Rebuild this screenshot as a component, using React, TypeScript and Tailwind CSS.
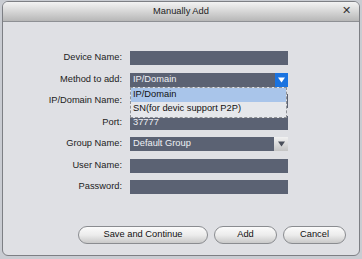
import React from "react";

const Arrow = ({ color }: { color: string }) => (
  <svg width="7" height="6" viewBox="0 0 7 6">
    <path d="M0 0.5 H7 L3.5 5.5 Z" fill={color} />
  </svg>
);

function Row({ label, children }: { label: string; children: React.ReactNode }) {
  return (
    <div className="flex h-[14px] items-center">
      <div className="w-[120px] shrink-0 pr-[1px] text-right text-[#1c1c1c]">{label}</div>
      <div className="relative ml-[7px] h-[14px] w-[158px]">{children}</div>
    </div>
  );
}

const Field = ({ value }: { value?: string }) => (
  <div className="flex h-full w-full items-center bg-[#5b6273] pl-[3px] text-[#eef0f4]">{value}</div>
);

export default function App() {
  return (
    <div
      className="relative h-[259px] w-[362px] overflow-hidden bg-[#c9ccd2] pt-[1px] pl-[2px]"
      style={{ fontFamily: '"Liberation Sans", Arial, sans-serif' }}
    >
      <div className="flex h-[255px] w-[358px] flex-col overflow-hidden rounded-[6px] border border-[#7d7f84] bg-[#dfe0e4] text-[9.3px]">
        <div className="relative flex h-[20px] shrink-0 items-center justify-center border-b border-[#8e9094] bg-gradient-to-b from-[#f3f3f3] via-[#d6d6d6] to-[#b7b7b7] text-[#222]">
          <span>Manually Add</span>
          <span className="absolute right-[8px] top-[3px] text-[11px] leading-none text-[#333]">✕</span>
        </div>
        <div className="flex flex-1 flex-col pt-[29px]">
          <div className="flex flex-col gap-[7.5px]">
            <Row label="Device Name:">
              <Field />
            </Row>
            <Row label="Method to add:">
              <div className="flex h-full w-full">
                <div className="flex flex-1 items-center bg-[#5b6273] pl-[3px] text-[#eef0f4]">IP/Domain</div>
                <div className="flex w-[13px] items-center justify-center bg-[#1a73e0]">
                  <Arrow color="#ffffff" />
                </div>
              </div>
              <div className="absolute left-0 top-[14px] z-10 w-[157px] border border-dashed border-[#8f9296] bg-[#e5e7eb] text-[#111]">
                <div className="flex h-[14px] items-center bg-[#a9c5ea] pl-[2px]">IP/Domain</div>
                <div className="flex h-[15px] items-center pl-[2px]">SN(for devic support P2P)</div>
              </div>
            </Row>
            <Row label="IP/Domain Name:">
              <Field />
            </Row>
            <Row label="Port:">
              <Field value="37777" />
            </Row>
            <Row label="Group Name:">
              <div className="flex h-full w-full">
                <div className="flex flex-1 items-center bg-[#5b6273] pl-[3px] text-[#eef0f4]">Default Group</div>
                <div className="flex w-[14px] items-center justify-center bg-gradient-to-b from-[#f2f2f2] to-[#c4c4c4]">
                  <Arrow color="#4a4f5a" />
                </div>
              </div>
            </Row>
            <Row label="User Name:">
              <Field />
            </Row>
            <Row label="Password:">
              <Field />
            </Row>
          </div>
          <div className="mt-auto flex justify-end gap-[6px] pb-[11px] pr-[13px]">
            {[
              ["Save and Continue", "w-[130px]"],
              ["Add", "w-[63px]"],
              ["Cancel", "w-[63px]"],
            ].map(([t, w]) => (
              <div
                key={t}
                className={`${w} flex h-[18px] items-center justify-center rounded-full border border-[#8a8c90] bg-gradient-to-b from-[#fbfbfb] via-[#ececec] to-[#c9c9c9] text-[#111]`}
              >
                {t}
              </div>
            ))}
          </div>
        </div>
      </div>
    </div>
  );
}
